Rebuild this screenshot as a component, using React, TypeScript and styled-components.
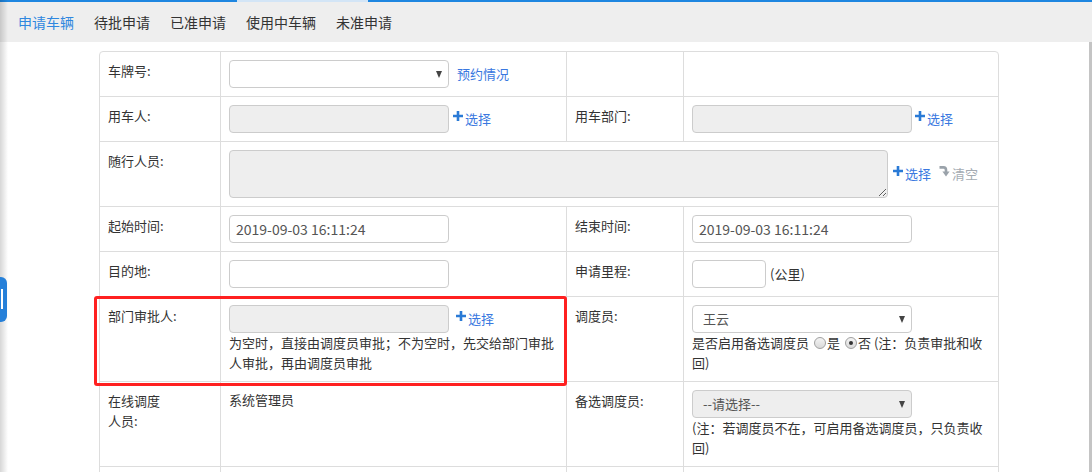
import React from 'react';
import styled, {createGlobalStyle} from 'styled-components';

const GlobalStyle = createGlobalStyle`
  html, body {
    margin: 0;
    padding: 0;
    background: #fff;
  }
  body {
    font-family: "Noto Sans CJK SC", "Noto Sans", sans-serif;
    font-size: 13px;
    color: #333;
  }
`;

const linkBlue = '#3a78e0';
const iconBlue = '#2a7ad6';

const Page = styled.div`
  position: relative;
  width: 1092px;
  height: 472px;
  overflow: hidden;
  display: flex;
  flex-direction: column;
`;

const TopLine = styled.div`
  height: 2px;
  flex: none;
  background: linear-gradient(
    to right,
    #1e86e0 237px,
    #d3e5f6 237px,
    #d3e5f6 368px,
    #1e86e0 368px
  );
`;

const TabBar = styled.div`
  height: 40px;
  flex: none;
  display: flex;
  align-items: center;
  padding-left: 8px;
  background: #eeeeee;
`;

const Tab = styled.div<{$active?: boolean}>`
  padding: 0 10px;
  font-size: 14px;
  line-height: 20px;
  color: ${({$active}) => ($active ? '#2f87df' : '#333')};
  cursor: pointer;
`;

const Content = styled.div`
  flex: 1;
  border-right: 3px solid #c4c4c4;
  padding: 9px 0 0 99px;
`;

const FormWrap = styled.div`
  position: relative;
  width: 900px;
`;

const Table = styled.table`
  width: 900px;
  table-layout: fixed;
  border-collapse: separate;
  border-spacing: 0;
  border: 1px solid #ddd;
  border-radius: 4px;

  tr + tr > td {
    border-top: 1px solid #ddd;
  }
  td + td {
    border-left: 1px solid #ddd;
  }
`;

const LabelCell = styled.td`
  padding: 9px 8px 7px;
  vertical-align: top;
  line-height: 20px;
  color: #333;
`;

const ValueCell = styled.td`
  padding: 8px;
  vertical-align: top;
  line-height: 20px;
  color: #333;
`;

const Line = styled.div`
  display: flex;
  align-items: center;
  min-height: 28px;
`;

const TextInput = styled.div<{$disabled?: boolean; $width?: number}>`
  box-sizing: border-box;
  width: ${({$width}) => $width ?? 220}px;
  height: 28px;
  padding: 0 6px;
  border: 1px solid #ccc;
  border-radius: 4px;
  background: ${({$disabled}) => ($disabled ? '#eeeeee' : '#fff')};
  font-size: 14px;
  line-height: 26px;
  color: #555;
  flex: none;
`;

const SelectBox = styled.div<{$disabled?: boolean}>`
  box-sizing: border-box;
  width: 220px;
  height: 28px;
  padding: 0 6px 0 10px;
  border: 1px solid #ccc;
  border-radius: 4px;
  background: ${({$disabled}) => ($disabled ? '#eeeeee' : '#fff')};
  display: flex;
  align-items: center;
  justify-content: space-between;
  font-size: 13px;
  color: #555;
  flex: none;
`;

const Caret = styled.span`
  width: 0;
  height: 0;
  border-left: 3.5px solid transparent;
  border-right: 3.5px solid transparent;
  border-top: 7px solid #444;
`;

const TextArea = styled.textarea`
  box-sizing: border-box;
  width: 659px;
  height: 48px;
  margin: 0;
  border: 1px solid #ccc;
  border-radius: 4px;
  background: #eeeeee;
  font-family: inherit;
  font-size: 13px;
  flex: none;
`;

const LinkText = styled.a<{$muted?: boolean; $gap?: number}>`
  display: inline-flex;
  align-items: center;
  margin-left: ${({$gap}) => $gap ?? 0}px;
  font-size: 13px;
  color: ${({$muted}) => ($muted ? '#a4abb2' : linkBlue)};
  text-decoration: none;
  cursor: pointer;
  white-space: nowrap;
`;

const IconWrap = styled.span`
  display: inline-flex;
  margin: 0 2px 6px 0;
`;

const Unit = styled.span`
  margin-left: 4px;
`;

const Note = styled.div`
  line-height: 20px;
  color: #333;
`;

const Radio = styled.span<{$checked?: boolean}>`
  display: inline-block;
  box-sizing: border-box;
  width: 12px;
  height: 12px;
  margin: 0 1px 0 5px;
  vertical-align: -1px;
  border: 1px solid #a0a0a0;
  border-radius: 50%;
  background: linear-gradient(#f4f4f4, #d9d9d9);
  position: relative;

  &::after {
    content: '';
    display: ${({$checked}) => ($checked ? 'block' : 'none')};
    position: absolute;
    left: 3px;
    top: 3px;
    width: 4px;
    height: 4px;
    border-radius: 50%;
    background: #333;
  }
`;

const Highlight = styled.div`
  position: absolute;
  left: -5px;
  top: 245px;
  width: 473px;
  height: 90px;
  box-sizing: border-box;
  border: 3px solid #ff2020;
  border-radius: 3px;
  pointer-events: none;
`;

const EdgeShadow = styled.div`
  position: absolute;
  left: 0;
  top: 0;
  bottom: 0;
  width: 8px;
  background: linear-gradient(to right, rgba(0, 0, 0, 0.16), rgba(0, 0, 0, 0));
  pointer-events: none;
`;

const SideHandle = styled.div`
  position: absolute;
  left: 0;
  top: 277px;
  width: 7px;
  height: 45px;
  border-radius: 0 6px 6px 0;
  background: #2680d9;

  &::after {
    content: '';
    position: absolute;
    left: 1px;
    top: 12px;
    width: 2px;
    height: 20px;
    background: #fff;
  }
`;

const PlusIcon = () => (
  <svg width="10" height="10" viewBox="0 0 10 10">
    <path d="M3.7 0h2.6v3.7H10v2.6H6.3V10H3.7V6.3H0V3.7h3.7z" fill={iconBlue} />
  </svg>
);

const ClearIcon = () => (
  <svg width="11" height="11" viewBox="0 0 11 11">
    <path
      d="M0.5 1.4 H4.5 Q7 1.4 7 4 V6"
      fill="none"
      stroke="#9aa2aa"
      strokeWidth="2.6"
    />
    <path d="M3.4 5.4 H10.6 L7 10.6 Z" fill="#9aa2aa" />
  </svg>
);

const Pick = ({gap}: {gap?: number}) => (
  <LinkText $gap={gap ?? 4}>
    <IconWrap><PlusIcon /></IconWrap>选择
  </LinkText>
);

const tabs = ['申请车辆', '待批申请', '已准申请', '使用中车辆', '未准申请'];

const App = () => (
  <>
    <GlobalStyle />
    <Page>
      <TopLine />
      <TabBar>
        {tabs.map((t, i) => (
          <Tab key={t} $active={i === 0}>{t}</Tab>
        ))}
      </TabBar>
      <Content>
        <FormWrap>
          <Table>
            <colgroup>
              <col style={{width: 120}} />
              <col style={{width: 346}} />
              <col style={{width: 117}} />
              <col style={{width: 315}} />
            </colgroup>
            <tbody>
              <tr>
                <LabelCell>车牌号:</LabelCell>
                <ValueCell>
                  <Line>
                    <SelectBox><span /><Caret /></SelectBox>
                    <LinkText $gap={8}>预约情况</LinkText>
                  </Line>
                </ValueCell>
                <LabelCell />
                <ValueCell />
              </tr>
              <tr>
                <LabelCell>用车人:</LabelCell>
                <ValueCell>
                  <Line>
                    <TextInput $disabled />
                    <Pick />
                  </Line>
                </ValueCell>
                <LabelCell>用车部门:</LabelCell>
                <ValueCell>
                  <Line>
                    <TextInput $disabled />
                    <Pick gap={3} />
                  </Line>
                </ValueCell>
              </tr>
              <tr>
                <LabelCell>随行人员:</LabelCell>
                <ValueCell colSpan={3}>
                  <Line>
                    <TextArea readOnly />
                    <Pick gap={5} />
                    <LinkText $muted $gap={8}>
                      <IconWrap><ClearIcon /></IconWrap>清空
                    </LinkText>
                  </Line>
                </ValueCell>
              </tr>
              <tr>
                <LabelCell>起始时间:</LabelCell>
                <ValueCell>
                  <TextInput>2019-09-03 16:11:24</TextInput>
                </ValueCell>
                <LabelCell>结束时间:</LabelCell>
                <ValueCell>
                  <TextInput>2019-09-03 16:11:24</TextInput>
                </ValueCell>
              </tr>
              <tr>
                <LabelCell>目的地:</LabelCell>
                <ValueCell>
                  <TextInput />
                </ValueCell>
                <LabelCell>申请里程:</LabelCell>
                <ValueCell>
                  <Line>
                    <TextInput $width={74} />
                    <Unit>(公里)</Unit>
                  </Line>
                </ValueCell>
              </tr>
              <tr>
                <LabelCell>部门审批人:</LabelCell>
                <ValueCell>
                  <Line>
                    <TextInput $disabled />
                    <Pick gap={7} />
                  </Line>
                  <Note>为空时，直接由调度员审批；不为空时，先交给部门审批人审批，再由调度员审批</Note>
                </ValueCell>
                <LabelCell>调度员:</LabelCell>
                <ValueCell>
                  <Line>
                    <SelectBox><span>王云</span><Caret /></SelectBox>
                  </Line>
                  <Note>
                    是否启用备选调度员<Radio />是<Radio $checked />否 (注：负责审批和收<br />回)
                  </Note>
                </ValueCell>
              </tr>
              <tr>
                <LabelCell>在线调度<br />人员:</LabelCell>
                <ValueCell>系统管理员</ValueCell>
                <LabelCell>备选调度员:</LabelCell>
                <ValueCell>
                  <Line>
                    <SelectBox $disabled><span>--请选择--</span><Caret /></SelectBox>
                  </Line>
                  <Note>(注：若调度员不在，可启用备选调度员，只负责收回)</Note>
                </ValueCell>
              </tr>
              <tr>
                <LabelCell>&nbsp;</LabelCell>
                <ValueCell>&nbsp;</ValueCell>
                <LabelCell>&nbsp;</LabelCell>
                <ValueCell>&nbsp;</ValueCell>
              </tr>
            </tbody>
          </Table>
          <Highlight />
        </FormWrap>
      </Content>
      <EdgeShadow />
      <SideHandle />
    </Page>
  </>
);

export default App;
